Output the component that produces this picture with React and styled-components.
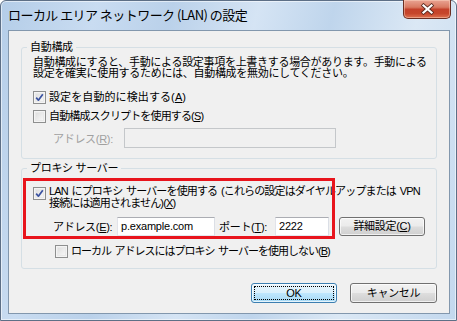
import React from "react";
import styled, { createGlobalStyle } from "styled-components";

const uiFont = `"Liberation Sans", "Noto Sans CJK JP", sans-serif`;

const GlobalStyle = createGlobalStyle`
  html, body {
    margin: 0;
    padding: 0;
  }
  body {
    width: 457px;
    height: 321px;
    overflow: hidden;
    font-family: "Noto Sans CJK JP", "Noto Sans", sans-serif;
    color: #000;
  }
`;

const Window = styled.div`
  box-sizing: border-box;
  width: 457px;
  height: 321px;
  display: flex;
  flex-direction: column;
  border: 1px solid #5d6f86;
  border-radius: 6px 6px 0 0;
  background: linear-gradient(
    105deg,
    #b4cde8 0%,
    #c9dcf1 18%,
    #bad1ea 32%,
    #d5e4f4 48%,
    #bfd5ec 62%,
    #dbe8f5 78%,
    #c3d8ee 100%
  );
  box-shadow: inset 0 0 0 1px rgba(255, 255, 255, 0.55);
`;

const TitleBar = styled.div`
  height: 29px;
  display: flex;
  align-items: flex-start;
  padding-left: 7px;
`;

const Title = styled.div`
  font-size: 13px;
  line-height: 28px;
  letter-spacing: -0.55px;
  white-space: nowrap;
`;

const CloseButton = styled.div`
  box-sizing: border-box;
  margin-left: auto;
  margin-right: 5px;
  margin-top: -1px;
  width: 48px;
  height: 19px;
  border: 1px solid #6b2e22;
  border-top: none;
  border-radius: 0 0 5px 5px;
  background: linear-gradient(
    #e9a493 0%,
    #d97a62 40%,
    #c4412a 52%,
    #c6462b 75%,
    #de7150 100%
  );
  box-shadow: inset 0 0 0 1px rgba(255, 220, 200, 0.45);
  display: flex;
  align-items: center;
  justify-content: center;
`;

const Client = styled.div`
  flex: 1;
  margin: 0 6px 6px 7px;
  border: 1px solid #8297ad;
  background: #f0f0f0;
  padding: 10px 12px 10px 12px;
  display: flex;
  flex-direction: column;
  font-family: ${uiFont};
  font-size: 11px;
  letter-spacing: -0.3px;
`;

const Group = styled.fieldset`
  margin: 0;
  margin-top: ${(p) => p.$top || 0}px;
  padding: 0;
  min-width: 0;
  border: 1px solid #d5dfe5;
  border-radius: 3px;
`;

const Legend = styled.legend`
  margin-left: 5px;
  padding: 0 3px;
  font-size: 11px;
  line-height: 12px;
`;

const GroupBody = styled.div`
  position: relative;
  display: flex;
  flex-direction: column;
  padding: ${(p) => p.$pad};
`;

const Desc = styled.div`
  line-height: 11px;
  white-space: nowrap;
`;

const Row = styled.div`
  display: flex;
  align-items: ${(p) => (p.$multi ? "flex-start" : "center")};
  height: ${(p) => (p.$h ? `${p.$h}px` : "auto")};
  margin-top: ${(p) => p.$top || 0}px;
  padding-left: ${(p) => p.$indent || 0}px;
`;

const Box = styled.span`
  box-sizing: border-box;
  flex: none;
  width: 13px;
  height: 13px;
  margin-top: ${(p) => p.$top || 0}px;
  margin-right: 3px;
  border: 1px solid #8e8f8f;
  background: linear-gradient(135deg, #d8d8d8 0%, #ededed 55%, #fbfbfb 100%);
  box-shadow: inset 0 0 0 1px #f4f4f4, inset 0 0 0 2px #e9e9e9;
  display: flex;
  align-items: center;
  justify-content: center;
`;

const LabelText = styled.span`
  line-height: ${(p) => p.$lh || 11}px;
  letter-spacing: ${(p) => (p.$ls !== undefined ? p.$ls : -0.3)}px;
  word-spacing: ${(p) => p.$ws || 0}px;
  white-space: nowrap;
  color: ${(p) => (p.$disabled ? "#a0a0a0" : "#000")};
`;

const FieldLabel = styled.span`
  box-sizing: border-box;
  flex: none;
  width: ${(p) => p.$w}px;
  padding-left: ${(p) => p.$pl || 0}px;
  white-space: nowrap;
  color: ${(p) => (p.$disabled ? "#a0a0a0" : "#000")};
`;

const TextBox = styled.input`
  box-sizing: border-box;
  flex: none;
  width: ${(p) => p.$w}px;
  height: ${(p) => p.$h || 19}px;
  margin: 0;
  padding: 0 3px;
  border: 1px solid;
  border-color: ${(p) =>
    p.disabled ? "#c4c7ca" : "#abadb3 #dbdfe6 #e3e9ef #e2e3ea"};
  background: ${(p) => (p.disabled ? "#f0f0f0" : "#fff")};
  font-family: ${uiFont};
  font-size: 11px;
  letter-spacing: -0.2px;
  color: #000;
  outline: none;
`;

const Button = styled.button`
  box-sizing: border-box;
  flex: none;
  width: ${(p) => p.$w}px;
  height: ${(p) => p.$h || 20}px;
  margin: 0;
  margin-left: ${(p) => p.$left || 0}px;
  padding: 2px;
  display: flex;
  border: 1px solid ${(p) => (p.$default ? "#3c7fb1" : "#707070")};
  border-radius: 3px;
  background: ${(p) =>
    p.$default
      ? "linear-gradient(#eaf6fd 0%, #d9f0fc 48%, #bee6fd 52%, #a7d9f5 100%)"
      : "linear-gradient(#f2f2f2 0%, #ebebeb 48%, #dddddd 52%, #cfcfcf 100%)"};
  box-shadow: inset 0 0 0 1px rgba(255, 255, 255, 0.7);
  font-family: ${uiFont};
  font-size: 11px;
  letter-spacing: -0.3px;
  color: #000;
`;

const ButtonFace = styled.span`
  flex: 1;
  display: flex;
  align-items: center;
  justify-content: center;
  border: 1px dotted ${(p) => (p.$focus ? "#000" : "transparent")};
  line-height: 11px;
`;

const Highlight = styled.div`
  position: absolute;
  left: 1px;
  top: 4px;
  width: 312px;
  height: 61px;
  box-sizing: border-box;
  border: 3px solid #e8141c;
  pointer-events: none;
`;

const ButtonRow = styled.div`
  margin-top: auto;
  display: flex;
  justify-content: flex-end;
`;

const Check = ({ checked, top }) => (
  <Box $top={top}>
    {checked && (
      <svg width="9" height="9" viewBox="0 0 9 9">
        <path
          d="M1.2 4.6 L3.4 7.2 L7.8 1.2"
          fill="none"
          stroke="#3a52a0"
          strokeWidth="1.7"
          strokeLinejoin="round"
        />
      </svg>
    )}
  </Box>
);

const CloseIcon = () => (
  <svg width="15" height="12" viewBox="0 0 15 12">
    <path d="M3.5 2.5 L11.5 9.5 M11.5 2.5 L3.5 9.5" stroke="#5a2a20" strokeWidth="3.8" strokeLinecap="square" />
    <path d="M3.5 2.5 L11.5 9.5 M11.5 2.5 L3.5 9.5" stroke="#ffffff" strokeWidth="2.2" strokeLinecap="square" />
  </svg>
);

export default function App() {
  return (
    <>
      <GlobalStyle />
      <Window>
        <TitleBar>
          <Title>ローカル エリア ネットワーク (LAN) の設定</Title>
          <CloseButton>
            <CloseIcon />
          </CloseButton>
        </TitleBar>
        <Client>
          <Group>
            <Legend>自動構成</Legend>
            <GroupBody $pad="4px 11px 10px 11px">
              <Desc>
                自動構成にすると、手動による設定事項を上書きする場合があります。手動による
                <br />
                設定を確実に使用するためには、自動構成を無効にしてください。
              </Desc>
              <Row $h={19} $top={9}>
                <Check checked />
                <LabelText $ls={0.1}>
                  設定を自動的に検出する(<u>A</u>)
                </LabelText>
              </Row>
              <Row $h={19}>
                <Check />
                <LabelText $ls={-0.85}>
                  自動構成スクリプトを使用する(<u>S</u>)
                </LabelText>
              </Row>
              <Row $h={20} $top={2} $indent={20}>
                <FieldLabel $w={71} $disabled>
                  アドレス(<u>R</u>):
                </FieldLabel>
                <TextBox $w={212} $h={20} disabled readOnly value="" />
              </Row>
            </GroupBody>
          </Group>
          <Group $top={3}>
            <Legend>プロキシ サーバー</Legend>
            <GroupBody $pad="11px 11px 7px 11px">
              <Row $multi>
                <Check checked top={2} />
                <LabelText $ls={-0.85} $ws={1.5} $lh={12}>
                  LAN にプロキシ サーバーを使用する (これらの設定はダイヤルアップまたは VPN
                  <br />
                  接続には適用されません)(<u>X</u>)
                </LabelText>
              </Row>
              <Row $h={20} $top={7} $indent={20}>
                <FieldLabel $w={64}>
                  アドレス(<u>E</u>):
                </FieldLabel>
                <TextBox $w={98} readOnly value="p.example.com" />
                <FieldLabel $w={60} $pl={4}>
                  ポート(<u>T</u>):
                </FieldLabel>
                <TextBox $w={54} readOnly value="2222" />
                <Button $w={86} $h={19} $left={10}>
                  <ButtonFace>
                    詳細設定(<u>C</u>)
                  </ButtonFace>
                </Button>
              </Row>
              <Row $h={19} $top={6} $indent={22}>
                <Check />
                <LabelText $ls={-1} $ws={1.5}>
                  ローカル アドレスにはプロキシ サーバーを使用しない(<u>B</u>)
                </LabelText>
              </Row>
              <Highlight />
            </GroupBody>
          </Group>
          <ButtonRow>
            <Button $w={86} $default>
              <ButtonFace $focus>OK</ButtonFace>
            </Button>
            <Button $w={87} $left={13}>
              <ButtonFace>キャンセル</ButtonFace>
            </Button>
          </ButtonRow>
        </Client>
      </Window>
    </>
  );
}
